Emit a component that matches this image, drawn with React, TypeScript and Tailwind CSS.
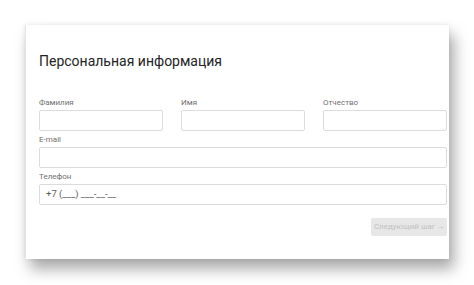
const Field = ({ label, children }: { label: string; children?: React.ReactNode }) => (
  <div className="flex flex-col gap-[1px]">
    <label className="h-[12px] text-[8px] leading-[12px] text-[#707070]">{label}</label>
    <div className="h-[21px] rounded-[2px] border border-[#dcdcdc] bg-white flex items-center px-[6px]">
      {children}
    </div>
  </div>
);

export default function App() {
  return (
    <div className="w-[474px] h-[285px] bg-white overflow-hidden" style={{ fontFamily: 'Roboto, "Noto Sans", sans-serif' }}>
      <div className="ml-[25px] mt-[25px] w-[424px] h-[234px] bg-white border-l border-[#e4e4e4] shadow-[5px_10px_14px_rgba(0,0,0,0.34),0_0_5px_rgba(0,0,0,0.08)] pl-[13px] pr-[2px] pt-[27px]">
        <h1 className="text-[14px] leading-[18px] text-[#232323] font-normal">Персональная информация</h1>

        <div className="mt-[27px] flex flex-col gap-[3px]">
          <div className="grid grid-cols-3 gap-x-[18px]">
            <Field label="Фамилия" />
            <Field label="Имя" />
            <Field label="Отчество" />
          </div>
          <Field label="E-mail" />
          <Field label="Телефон">
            <span className="text-[9.5px] text-[#5e5e5e]">+7 (___) ___-__-__</span>
          </Field>
        </div>

        <div className="mt-[13px] flex justify-end">
          <button className="w-[76px] h-[18px] rounded-[2px] bg-[#e7e7e7] text-[8px] text-[#c2c2c2] flex items-center justify-center gap-[1px]">
            Следующий шаг <span className="text-[#b5b5b5]">→</span>
          </button>
        </div>
      </div>
    </div>
  );
}
